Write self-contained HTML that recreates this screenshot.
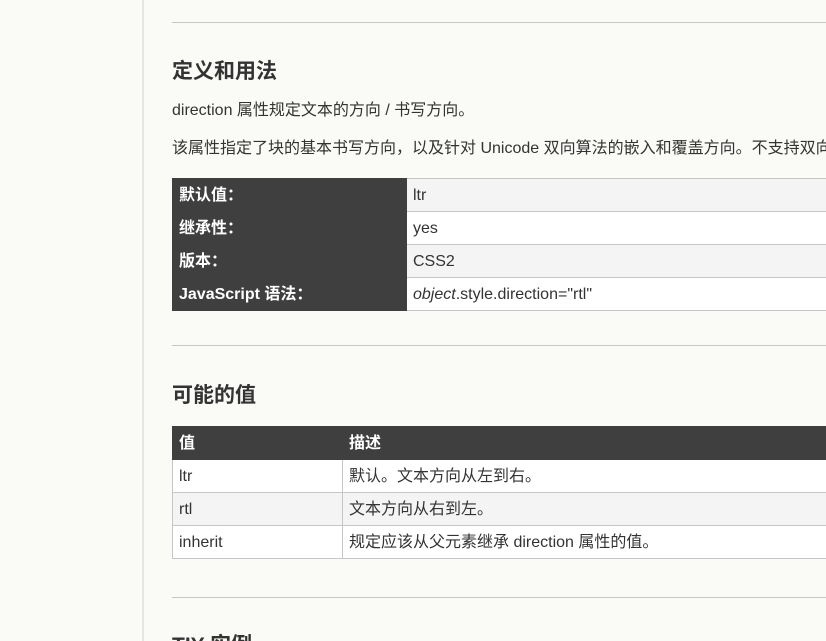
<!DOCTYPE html>
<html style="overflow:hidden;height:641px"><head><meta charset="utf-8"><style>
body{margin:0;width:826px;height:641px;overflow:hidden;background:#fafaf6;font-family:"Liberation Sans","Noto Sans CJK SC",sans-serif;color:#333;font-size:16px;position:relative}
.side{position:absolute;left:0;top:0;width:142px;height:641px;border-right:2px solid #e6e6e0;background:#fafaf6}
.c{position:absolute;left:172px;top:0;width:654px;height:641px;overflow:hidden}
hr{position:absolute;left:0;width:700px;border:0;border-top:1px solid #c6c6c6;margin:0}
h2{position:absolute;left:0;margin:0;font-size:21px;font-weight:bold;color:#333;line-height:28px}
p{position:absolute;left:0;margin:0;white-space:nowrap;line-height:22px}
table{position:absolute;left:0;border-collapse:collapse;width:700px}
td,th{height:32px;line-height:28px;padding:3px 6px 1px;box-sizing:border-box;text-align:left;border:1px solid #c6c6c6;font-size:16px;white-space:nowrap;vertical-align:middle}
th{background:#3f3f3f;color:#fff;font-weight:bold;border-color:#3f3f3f}
.t1 td{background:#f4f4f4}
.t1 tr:nth-child(2) td,.t1 tr:nth-child(4) td{background:#fff}
.t2 tr:nth-child(2) td,.t2 tr:nth-child(4) td{background:#fff}
.t2 tr:nth-child(3) td{background:#f4f4f4}
</style></head><body>
<div class="side"></div>
<div class="c">
<hr style="top:22px">
<h2 style="top:58px">定义和用法</h2>
<p style="top:100px">direction 属性规定文本的方向 / 书写方向。</p>
<p style="top:138px">该属性指定了块的基本书写方向，以及针对 Unicode 双向算法的嵌入和覆盖方向。不支持双向文本的用户代理可以忽略该属性。</p>
<table class="t1" style="top:178px">
<tr><th style="width:234px">默认值：</th><td>ltr</td></tr>
<tr><th>继承性：</th><td>yes</td></tr>
<tr><th>版本：</th><td>CSS2</td></tr>
<tr><th>JavaScript 语法：</th><td><i>object</i>.style.direction="rtl"</td></tr>
</table>
<hr style="top:345px">
<h2 style="top:382px">可能的值</h2>
<table class="t2" style="top:426px">
<tr><th style="width:170px">值</th><th>描述</th></tr>
<tr><td>ltr</td><td>默认。文本方向从左到右。</td></tr>
<tr><td>rtl</td><td>文本方向从右到左。</td></tr>
<tr><td>inherit</td><td>规定应该从父元素继承 direction 属性的值。</td></tr>
</table>
<hr style="top:597px">
<h2 style="top:632px">TIY 实例</h2>
</div>
</body></html>
